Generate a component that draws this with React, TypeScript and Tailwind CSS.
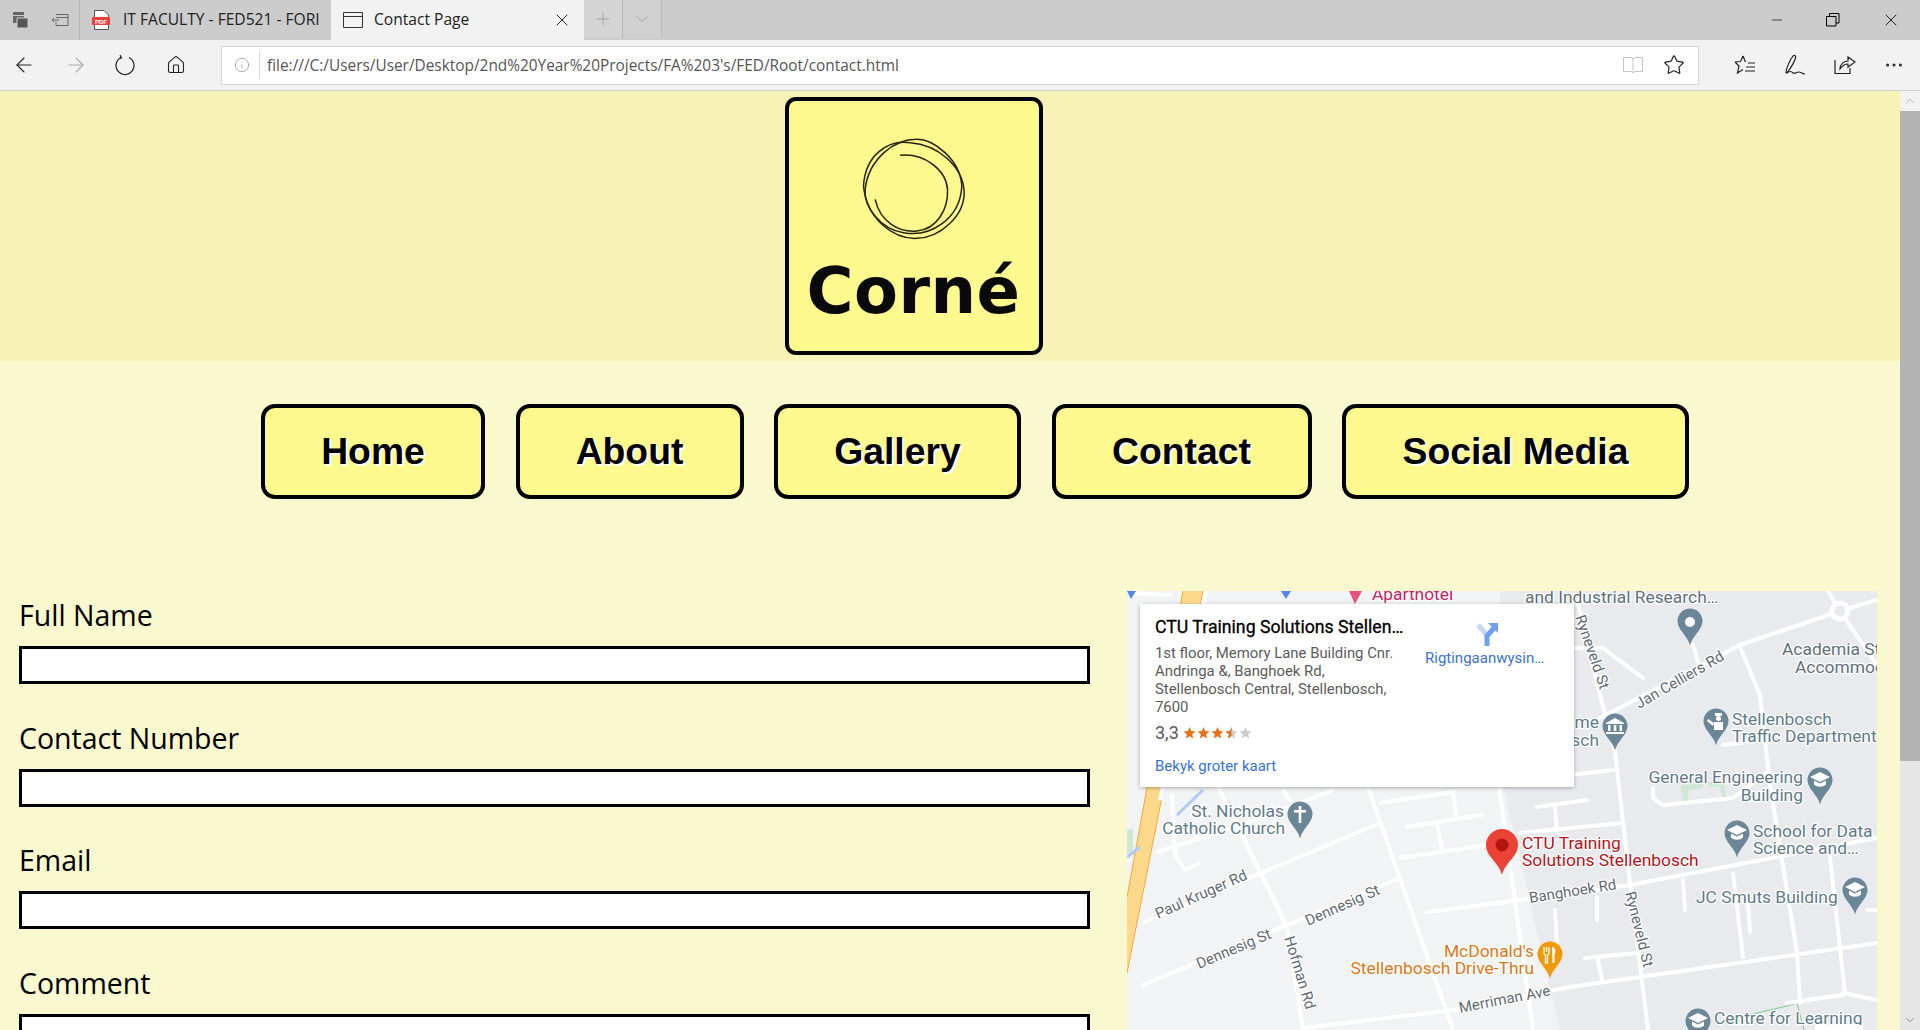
import { ArrowLeft, ArrowRight, ChevronDown, ChevronUp, Home, Info, Minus, MoreHorizontal, Plus, Star, X } from "lucide-react";

const roads = [
  "M1130 593 L1170 595",
  "M1158 852 L1250 822 L1333 790",
  "M1145 922 L1380 823",
  "M1143 985 L1400 878",
  "M1205 760 L1243 837 L1287 927 L1303 1030",
  "M1283 790 L1290 800",
  "M1368 787 L1453 1030",
  "M1303 1028 L1453 1010 L1570 987 L1877 943",
  "M1427 912 L1520 900 L1630 885 L1877 838",
  "M1577 600 L1600 695 L1615 752 L1630 883 L1648 1030",
  "M1498 780 L1533 1030",
  "M1600 718 L1740 645 L1840 611 L1877 600",
  "M1740 647 L1760 695 L1770 785 L1797 953 L1800 1003",
  "M1828 591 L1840 611 L1877 665",
  "M1830 857 L1845 993",
  "M1733 873 L1743 957",
  "M1683 880 L1685 910",
  "M1748 903 L1750 932",
  "M1597 897 L1597 920",
  "M1555 910 L1557 943",
  "M1585 958 L1637 953",
  "M1598 960 L1602 980",
  "M1537 807 L1587 800",
  "M1555 807 L1557 833",
  "M1520 833 L1622 823",
  "M1400 858 L1487 845",
  "M1407 827 L1482 815",
  "M1437 823 L1442 848",
  "M1380 803 L1453 792 L1456 815",
  "M1573 648 L1603 648 L1643 678",
  "M1570 775 L1613 770",
  "M1653 788 L1653 798 L1663 805 L1733 798 L1767 772",
  "M1693 645 L1698 662",
  "M1723 745 L1763 740",
  "M1843 993 L1877 1000",
  "M1787 1003 L1843 995",
  "M1867 910 L1877 910",
  "M1172 795 L1175 855 L1185 870 L1198 864",
];

const labels = [
  { t: "Aparthotel", x: 1372, y: 600, c: "#c5225f" },
  { t: "and Industrial Research…", x: 1525, y: 603, c: "#5f6f7a" },
  { t: "Academia St", x: 1782, y: 655, c: "#5f6f7a" },
  { t: "Accommodation", x: 1795, y: 673, c: "#5f6f7a" },
  { t: "Stellenbosch", x: 1732, y: 725, c: "#5f7a8a" },
  { t: "Traffic Department", x: 1732, y: 742, c: "#5f7a8a" },
  { t: "General Engineering", x: 1803, y: 783, c: "#5f7a8a", end: true },
  { t: "Building", x: 1803, y: 801, c: "#5f7a8a", end: true },
  { t: "me", x: 1599, y: 728, c: "#5f7a8a", end: true },
  { t: "sch", x: 1599, y: 746, c: "#5f7a8a", end: true },
  { t: "St. Nicholas", x: 1284, y: 817, c: "#5f7a8a", end: true },
  { t: "Catholic Church", x: 1285, y: 834, c: "#5f7a8a", end: true },
  { t: "McDonald's", x: 1534, y: 957, c: "#d9771a", end: true },
  { t: "Stellenbosch Drive-Thru", x: 1534, y: 974, c: "#d9771a", end: true },
  { t: "CTU Training", x: 1522, y: 849, c: "#b3141a" },
  { t: "Solutions Stellenbosch", x: 1522, y: 866, c: "#b3141a" },
  { t: "School for Data", x: 1753, y: 837, c: "#5f7a8a" },
  { t: "Science and…", x: 1753, y: 854, c: "#5f7a8a" },
  { t: "JC Smuts Building", x: 1696, y: 903, c: "#5f7a8a" },
  { t: "Centre for Learning", x: 1714, y: 1024, c: "#5f7a8a" },
];

const streets = [
  { t: "Ryneveld St", x: 1575, y: 617, r: 71 },
  { t: "Jan Celliers Rd", x: 1639, y: 709, r: -30 },
  { t: "Paul Kruger Rd", x: 1158, y: 919, r: -24 },
  { t: "Dennesig St", x: 1199, y: 969, r: -23 },
  { t: "Dennesig St", x: 1308, y: 926, r: -24 },
  { t: "Hofman Rd", x: 1284, y: 938, r: 73 },
  { t: "Merriman Ave", x: 1460, y: 1013, r: -11 },
  { t: "Banghoek Rd", x: 1530, y: 903, r: -9 },
  { t: "Ryneveld St", x: 1625, y: 893, r: 76 },
];

const Pin = ({ x, y, fill = "#6b8797", children }: { x: number; y: number; fill?: string; children?: React.ReactNode }) => (
  <g transform={`translate(${x} ${y})`}>
    <path d="M0 23.5C-2 14-12.5 8-12.5-1A12.5 12.5 0 1 1 12.5-1C12.5 8 2 14 0 23.5Z" fill={fill} />
    {children}
  </g>
);

const Cap = () => (
  <g fill="white">
    <path d="M0-9L10-4 0 1-10-4Z" />
    <path d="M-6-.5L0 2.5 6-.5V3.5C3 6.5-3 6.5-6 3.5Z" />
  </g>
);

const MapDrawing = () => (
  <svg className="absolute inset-0 h-full w-full" viewBox="1127 591 750 439" preserveAspectRatio="none">
    <rect x="1127" y="591" width="750" height="439" fill="#f1f3f4" />
    <path d="M1500 591H1877V1030H1560L1503 785Z" fill="#e8eaed" />
    <path d="M1127 830l6-2v22l-6 4Z" fill="#cfe8d5" />
    <path d="M1681 785l22-3-1 6-14 2 1 14-6 0Z M1708 782l16-2 2 18-4 0-2-12-12 1Z" fill="#cfe8d5" />
    <path d="M1727 1020L1787 1006 1797 1003 1804 1030" fill="none" stroke="#7fc98f" strokeWidth="1" />
    <path d="M1183 591H1203L1127 973V897Z" fill="#fcd98a" />
    <path d="M1183 591L1127 897M1203 591L1127 973" stroke="#f2a93b" strokeWidth="1" fill="none" />
    <path d="M1203 790L1177 815M1140 847L1127 857" stroke="#aecbfa" strokeWidth="3" fill="none" />
    <path d="M1206 591L1160 800" stroke="white" strokeWidth="4" fill="none" />
    {roads.map((d) => (
      <path key={d} d={d} stroke="white" strokeWidth="4" strokeLinecap="round" strokeLinejoin="round" fill="none" />
    ))}
    <circle cx="1840" cy="611" r="8" fill="#e8eaed" stroke="white" strokeWidth="5" />

    <g className="[font-family:Roboto,sans-serif] text-[17.4px] [paint-order:stroke]" stroke="white" strokeWidth="2.5" strokeLinejoin="round">
      {labels.map((l) => (
        <text key={l.t + l.y} x={l.x} y={l.y} fill={l.c} textAnchor={l.end ? "end" : "start"}>
          {l.t}
        </text>
      ))}
    </g>
    <g className="[font-family:Roboto,sans-serif] text-[15px] [paint-order:stroke]" stroke="white" strokeWidth="2.5" strokeLinejoin="round">
      {streets.map((s) => (
        <text key={s.t + s.x} x={s.x} y={s.y} fill="#616a72" transform={`rotate(${s.r} ${s.x} ${s.y})`}>
          {s.t}
        </text>
      ))}
    </g>

    <path d="M1349 591H1362L1355 604Z" fill="#e8527f" />
    <path d="M1127 591H1136L1131 599Z M1281 591H1291L1286 599Z" fill="#4f86e8" />

    <Pin x={1690} y={622}><circle r="5" fill="white" /></Pin>
    <Pin x={1615} y={727}>
      <g fill="white">
        <path d="M0-9L9-4V-3H-9V-4Z" />
        <path d="M-7-2h2.5v6H-7ZM-1.2-2h2.5v6h-2.5ZM4.5-2H7v6H4.5Z" />
        <path d="M-9 5H9V7H-9Z" />
      </g>
    </Pin>
    <Pin x={1716} y={722}>
      <g fill="white">
        <path d="M-1-9H6V-6H-1Z" />
        <circle cx="2.5" cy="-3.5" r="2.5" />
        <path d="M-2 0H7V8H-2ZM-8-3L-2 1-3 4-9-1Z" />
      </g>
    </Pin>
    <Pin x={1820} y={781}><Cap /></Pin>
    <Pin x={1737} y={834}><Cap /></Pin>
    <Pin x={1855} y={891}><Cap /></Pin>
    <Pin x={1698} y={1022}><Cap /></Pin>
    <Pin x={1300} y={815}><path d="M-1.3-9H1.3V-5H6V-2.6H1.3V8H-1.3V-2.6H-6V-5H-1.3Z" fill="white" /></Pin>
    <Pin x={1550} y={955} fill="#f29900">
      <path d="M-6-8V-2Q-6 0-4.5 0V8H-2.5V0Q-1-.5-1-2V-8M-3.5-8V-3" stroke="white" strokeWidth="1.3" fill="none" />
      <path d="M2-8C6-8 6-2 4.5-1V8H2.5Z" fill="white" />
    </Pin>
    <g transform="translate(1502 845)">
      <path d="M0 30C-3 17-16 12-16 0A16 16 0 1 1 16 0C16 12 3 17 0 30Z" fill="#ea4335" />
      <circle r="6.5" fill="#b31412" />
    </g>
    <rect x="1815" y="1025" width="48" height="5" fill="white" />
  </svg>
);

const RatingStars = () => (
  <svg width="72" height="14" viewBox="0 0 72 14" className="ml-1">
    {[0, 1, 2, 3, 4].map((i) => (
      <path
        key={i}
        transform={`translate(${i * 14} 0)`}
        d="M6.5 1L8.2 5 12.5 5.4 9.2 8.2 10.2 12.5 6.5 10.2 2.8 12.5 3.8 8.2.5 5.4 4.8 5Z"
        fill={i < 3 ? "#e7711b" : "#ccc"}
      />
    ))}
    <path transform="translate(42 0)" d="M6.5 1V10.2L2.8 12.5 3.8 8.2.5 5.4 4.8 5Z" fill="#e7711b" />
  </svg>
);

const InfoCard = () => (
  <div className="absolute left-[13px] top-[13px] flex h-[183px] w-[434px] bg-white pl-[15px] pt-[11px] shadow-[0_1px_4px_rgba(0,0,0,0.3)] [font-family:Roboto,sans-serif]">
    <div className="w-[270px]">
      <div className="whitespace-nowrap text-[17.7px] leading-[24px] text-black [-webkit-text-stroke:0.3px_black]">CTU Training Solutions Stellen…</div>
      <div className="mt-[6px] text-[14.9px] leading-[17.9px] text-[#5b5b5b]">
        1st floor, Memory Lane Building Cnr.
        <br />
        Andringa &amp;, Banghoek Rd,
        <br />
        Stellenbosch Central, Stellenbosch,
        <br />
        7600
      </div>
      <div className="mt-[6px] flex items-center text-[18px] leading-[20px] text-[#5b5b5b]">
        3,3
        <RatingStars />
      </div>
      <div className="mt-[14px] text-[15px] leading-[18px] text-[#3a72d6]">Bekyk groter kaart</div>
    </div>
    <div className="flex flex-col">
      <svg width="24" height="24" viewBox="0 0 24 24" className="ml-[50px] mt-[7px]">
        <path d="M3 3L11 12" stroke="#c6d8f8" strokeWidth="5" fill="none" />
        <path d="M12 24V14L19 6" stroke="#6f9ff0" strokeWidth="5" fill="none" />
        <path d="M13 1H23V11Z" fill="#6f9ff0" />
      </svg>
      <div className="mt-[2px] text-[15px] leading-[20px] text-[#3a72d6]">Rigtingaanwysin…</div>
    </div>
  </div>
);

const Logo = () => (
  <div className="ml-[785px] flex h-[258px] w-[258px] flex-col items-center rounded-[11px] border-[4px] border-black bg-[#fdf98e]">
    <svg width="107" height="105" viewBox="300 140 320 315" className="mt-[35px] ml-[-2px]" fill="none" stroke="#26230a" strokeWidth="4.500">
      <path d="M345 330C360 400 420 430 470 425C530 420 565 360 562 300C558 240 490 190 420 198" />
      <path d="M310 290C315 200 380 150 450 160C530 165 610 230 612 310C612 380 540 445 470 447C400 450 320 390 310 290" />
      <path d="M315 300C310 350 360 420 430 430C510 445 600 390 605 290C600 210 520 150 470 150C400 150 325 210 315 300" />
    </svg>
    <div className="mt-[12px] ml-[-1px] text-[64px] font-bold leading-[76px] tracking-[0.5px] text-[#0a0a0a] [font-family:'DejaVu_Sans',sans-serif]">
      Corné
    </div>
  </div>
);

const navItems = [
  { name: "Home", w: "w-[224px]" },
  { name: "About", w: "w-[228px]" },
  { name: "Gallery", w: "w-[247px]" },
  { name: "Contact", w: "w-[260px]" },
  { name: "Social Media", w: "w-[347px]" },
];

const fields = ["Full Name", "Contact Number", "Email", "Comment"];

const TabStrip = () => (
  <div className="flex h-10 shrink-0 items-stretch bg-[#cccccc] text-[15.6px] text-[#222] [font-family:'Open_Sans',sans-serif]">
    <div className="flex w-[80px] items-center border-r border-[#b5b5b5] pl-[12px]">
      <svg width="18" height="18" viewBox="0 0 18 18" fill="#666">
        <path d="M1 1h11v3H1zM1 5h11v7H1z" />
        <path d="M5 7h11v10H5z" fill="#555" stroke="#ccc" />
      </svg>
      <svg width="18" height="16" viewBox="0 0 18 16" className="ml-[21px]" fill="none" stroke="#666">
        <path d="M5 2.5h12v11H5V10M5 5.5h12M1 8h7M3 6L1 8l2 2" />
      </svg>
    </div>
    <div className="flex w-[251px] items-center overflow-hidden pl-[12px]">
      <svg width="18" height="20" viewBox="0 0 18 20" className="shrink-0">
        <path d="M2.500 .5H12L16.500 5V19.500H2.500Z" fill="white" stroke="#555" />
        <rect x="0" y="7" width="18" height="8" rx="1" fill="#e8423f" />
        <text x="9" y="13.500" textAnchor="middle" fill="white" className="text-[6px] font-bold [font-family:'Liberation_Sans',sans-serif]">PDF</text>
      </svg>
      <span className="ml-[13px] whitespace-nowrap">IT FACULTY - FED521 - FORI</span>
    </div>
    <div className="flex w-[253px] items-center bg-[#f2f2f2] pl-[12px]">
      <svg width="20" height="16" viewBox="0 0 20 16" fill="none" stroke="#333">
        <path d="M.5.5h19v15H.5zM.5 4.5h19" />
      </svg>
      <span className="ml-[11px]">Contact Page</span>
      <X className="ml-auto mr-[12px] h-[20px] w-[20px]" strokeWidth={1.2} />
    </div>
    <div className="flex h-[38px] w-[39px] items-center justify-center border-r border-[#b8b8b8] bg-[#d4d4d4]">
      <Plus className="h-[20px] w-[20px] text-[#999]" strokeWidth={1} />
    </div>
    <div className="flex h-[38px] w-[39px] items-center justify-center border-r border-[#bdbdbd] bg-[#d0d0d0]">
      <ChevronDown className="h-[20px] w-[20px] text-[#999]" strokeWidth={1} />
    </div>
    <div className="ml-auto flex items-center text-black">
      <Minus className="h-[16px] w-[16px]" strokeWidth={1} />
      <svg width="14" height="14" viewBox="0 0 14 14" className="ml-[41px]" fill="none" stroke="black">
        <path d="M.5 3.5h9.5v9.5H.5zM3.5 3.5V.5h9.5v9.5H10" />
      </svg>
      <X className="ml-[41px] mr-[19px] h-[20px] w-[20px]" strokeWidth={1} />
    </div>
  </div>
);

const Toolbar = () => (
  <div className="flex h-[51px] shrink-0 items-center border-b border-[#d0d0d0] bg-[#f2f2f2] pl-[12px] text-[#222]">
    <ArrowLeft className="h-[24px] w-[24px]" strokeWidth={1.1} />
    <ArrowRight className="ml-[28px] h-[24px] w-[24px] text-[#aaa]" strokeWidth={1.1} />
    <svg width="20" height="22" viewBox="0 0 20 22" className="ml-[27px]" fill="none" stroke="#222" strokeWidth="1.2">
      <path d="M6 3.5A9 9 0 1 0 14 3.5M5 1L6.5 4 3.5 5" />
    </svg>
    <Home className="ml-[31px] h-[20px] w-[20px]" strokeWidth={1.3} />
    <div className="ml-[35px] flex h-[39px] w-[1478px] items-center border border-[#d4d4d4] bg-white pl-[12px] pr-[13px]">
      <Info className="h-[16px] w-[16px] text-[#888]" strokeWidth={1} />
      <div className="ml-[9px] h-[28px] w-px bg-[#d8d8d8]" />
      <span className="ml-[7px] mt-[2px] text-[15.4px] text-[#555] [font-family:'Open_Sans',sans-serif]">
        file:///C:/Users/User/Desktop/2nd%20Year%20Projects/FA%203's/FED/Root/contact.html
      </span>
      <svg width="20" height="18" viewBox="0 0 20 18" className="ml-auto" fill="none" stroke="#c4c4c4">
        <path d="M.5 1.5h8L10 3l1.500-1.500h8v14h-8L10 17l-1.500-1.500h-8zM10 3v14" />
      </svg>
      <Star className="ml-[20px] h-[22px] w-[22px]" strokeWidth={1.3} />
    </div>
    <svg width="22" height="20" viewBox="0 0 22 20" className="ml-[35px]" fill="none" stroke="#222" strokeWidth="1.2">
      <path d="M9 1L11.200 6.500 H12 M1 7L6.500 6.500 9 1M1 7L5 11 3.500 18 9 14.500M14 8h7M12 12h9M11 16h10" />
    </svg>
    <svg width="22" height="22" viewBox="0 0 22 22" className="ml-[28px]" fill="none" stroke="#222" strokeWidth="1.2">
      <path d="M2 19C2 14 6 6 9 2 11 .5 12 2 11.500 4 10 9 6 15 3 19ZM3 19C6 17 7 17 9 19 12 20 12 18 15 18 17 18 18 20 21 20" />
    </svg>
    <svg width="22" height="20" viewBox="0 0 22 20" className="ml-[28px]" fill="none" stroke="#222" strokeWidth="1.2">
      <path d="M1 5V18.500H16V13M6 14C6 9 10 6 14 6V2L21 7 14 12V9C10 9 8 11 6 14Z" />
    </svg>
    <MoreHorizontal className="ml-[27px] h-[22px] w-[22px]" strokeWidth={1.3} />
  </div>
);

const ScrollRail = () => (
  <div className="flex w-5 shrink-0 flex-col bg-[#e6e6e6]">
    <div className="flex h-[20px] items-center justify-center bg-[#f2f2f2]">
      <ChevronUp className="h-[14px] w-[14px] text-[#999]" strokeWidth={1.2} />
    </div>
    <div className="h-[650px] bg-[#b3b3b3]" />
    <div className="mt-auto flex h-[20px] items-center justify-center">
      <ChevronDown className="h-[14px] w-[14px] text-[#666]" strokeWidth={1.2} />
    </div>
  </div>
);

export default function App() {
  return (
    <div className="flex h-[1030px] w-[1920px] flex-col overflow-hidden">
      <TabStrip />
      <Toolbar />
      <div className="flex min-h-0 flex-1">
        <div className="w-[1900px] overflow-hidden bg-[#f9f8cf]">
          <header className="flex h-[270px] items-center bg-[#f7f3b7]">
            <Logo />
          </header>
          <nav className="flex h-[230px] justify-center gap-[30.5px] pl-[50px] pt-[43px]">
            {navItems.map((item) => (
              <a
                key={item.name}
                className={`flex h-[95px] items-center justify-center rounded-[14px] border-[4px] border-black bg-[#fdf98e] text-[37.3px] font-bold text-black [font-family:'Liberation_Sans',sans-serif] [text-shadow:2px_2px_0_white] ${item.w}`}
              >
                {item.name}
              </a>
            ))}
          </nav>
          <main className="flex items-start pl-[19px]">
            <form className="mt-[4px] flex w-[1071px] flex-col gap-[33.5px] [font-family:'Open_Sans',sans-serif]">
              {fields.map((f) => (
                <div key={f} className="flex flex-col">
                  <label className="h-[40px] text-[28.5px] leading-[40px] text-black">{f}</label>
                  <input className="mt-[11px] h-[38px] w-full border-[3px] border-black bg-white" />
                </div>
              ))}
            </form>
            <div className="relative ml-[37px] h-[439px] w-[750px] overflow-hidden">
              <MapDrawing />
              <InfoCard />
            </div>
          </main>
        </div>
        <ScrollRail />
      </div>
    </div>
  );
}
